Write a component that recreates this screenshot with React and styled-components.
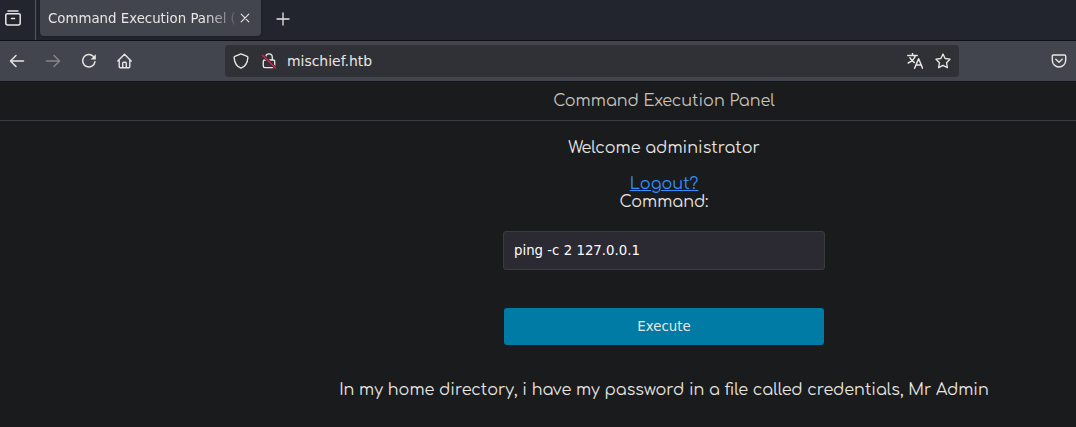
import React from "react";
import styled, { createGlobalStyle } from "styled-components";

const GlobalStyle = createGlobalStyle`
  * { box-sizing: border-box; }
  body { margin: 0; background: #1a1b1d; overflow: hidden; }
`;

const Window = styled.div`
  width: 100%;
  height: 427px;
  overflow: hidden;
  display: flex;
  flex-direction: column;
  background: #1a1b1d;
  font-family: "DejaVu Sans", sans-serif;
  font-size: 13.333px;
  color: #e8e6e3;
`;

const TabBar = styled.div`
  height: 41px;
  flex: none;
  display: flex;
  align-items: flex-start;
  background: #22252e;
  border-bottom: 1px solid #0f1013;
`;

const RecentTabs = styled.div`
  width: 36px;
  height: 40px;
  padding: 10px 0 0 5px;
  border-right: 1px solid #55575e;
`;

const Tab = styled.div`
  width: 221px;
  height: 36px;
  margin-left: 4px;
  padding: 0 8px;
  display: flex;
  align-items: center;
  justify-content: space-between;
  background: #42454d;
  border-radius: 0 0 4px 4px;
  box-shadow: 0 0 3px rgba(0, 0, 0, 0.35);
`;

const TabTitle = styled.span`
  width: 189px;
  padding-top: 2px;
  overflow: hidden;
  white-space: nowrap;
  line-height: 36px;
  mask-image: linear-gradient(to right, #000 158px, transparent 192px);
`;

const NewTab = styled.div`
  padding: 12px 0 0 14.5px;
`;

const Toolbar = styled.div`
  height: 41px;
  flex: none;
  display: flex;
  align-items: center;
  background: #42454d;
  border-bottom: 1px solid #151619;
`;

const NavButtons = styled.div`
  width: 225px;
  padding-left: 9px;
  display: flex;
  gap: 20px;
`;

const AddressBar = styled.div`
  width: 734px;
  height: 32px;
  padding: 0 8px;
  display: flex;
  align-items: center;
  background: #303136;
  border-radius: 4px;
`;

const Address = styled.span`
  flex: 1;
  margin-left: 10px;
  font-size: 13.95px;
`;

const IconPair = styled.div`
  display: flex;
  gap: 12px;
`;

const PocketButton = styled.div`
  margin-left: 92px;
  display: flex;
`;

const Icon = styled.svg`
  display: block;
  flex: none;
  width: ${(p) => p.$size || 16}px;
  height: ${(p) => p.$size || 16}px;
  fill: none;
  stroke: ${(p) => p.$color || "#e8e6e3"};
  stroke-width: ${(p) => p.$weight || 1.35};
  stroke-linecap: round;
  stroke-linejoin: round;
`;

/* The page is wider than the visible part of the window. */
const Page = styled.main`
  width: 1328px;
  flex: none;
  display: flex;
  flex-direction: column;
  align-items: center;
  font-family: Comfortaa, Lato, sans-serif;
  font-size: 16px;
  line-height: 18px;
`;

const Header = styled.header`
  width: 100%;
  height: 39px;
  padding-top: 10px;
  border-bottom: 1px solid #3a3d40;
  text-align: center;
  color: #c8c3bc;
`;

const Line = styled.div`
  height: 18px;
  margin-top: ${(p) => p.$top || 0}px;
  white-space: nowrap;
`;

const Logout = styled.a`
  color: #3391ff;
  text-decoration: underline;
`;

const CommandForm = styled.form`
  display: flex;
  flex-direction: column;
  align-items: center;
  margin-top: 20px;
`;

const CommandInput = styled.input`
  width: 322px;
  height: 39px;
  padding: 0 10px;
  background: #2b2a33;
  border: 1px solid #393c3f;
  border-radius: 3px;
  color: #fbfbfe;
  font: 13.333px "DejaVu Sans", sans-serif;
  outline: none;
`;

const ExecuteButton = styled.button`
  width: 320px;
  height: 37px;
  margin-top: 38px;
  padding: 0;
  background: #007ba5;
  border: 0;
  border-radius: 3px;
  color: #e8e6e3;
  font: 13.333px "DejaVu Sans", sans-serif;
`;

export default function App() {
  return (
    <Window>
      <GlobalStyle />
      <TabBar>
        <RecentTabs>
          <Icon $weight={1.5}>
            <path d="M3 .9h10M2.200 3.700h11.600q1.400 0 1.400 1.400v8q0 2-2 2H2.800q-2 0-2-2v-8q0-1.400 1.400-1.400zM6.500 8.500h3" />
          </Icon>
        </RecentTabs>
        <Tab>
          <TabTitle>Command Execution Panel (P</TabTitle>
          <Icon $weight={1.1}>
            <path d="M4.200 4.200l7.600 7.600M11.800 4.200l-7.600 7.600" />
          </Icon>
        </Tab>
        <NewTab>
          <Icon $weight={1.3} $size={14}>
            <path d="M7 1v12M1 7h12" />
          </Icon>
        </NewTab>
      </TabBar>

      <Toolbar>
        <NavButtons>
          <Icon $weight={1.5}>
            <path d="M1.500 8h13M7 2.500L1.500 8 7 13.500" />
          </Icon>
          <Icon $weight={1.5} $color="#85868a">
            <path d="M1.500 8h13M9 2.500L14.500 8 9 13.500" />
          </Icon>
          <Icon $weight={1.5}>
            <path d="M14 8.700A6.200 6.200 0 1 1 12.200 3.300" />
            <path d="M14.800 1.300v5.200H9.600z" fill="#e8e6e3" stroke="none" />
          </Icon>
          <Icon $weight={1.4}>
            <path d="M.8 8L7.500 1.300 14.200 8M2.200 7v6.600q0 1.200 1.200 1.200h8.200q1.200 0 1.200-1.200V7M5.700 14.500V10.200q0-1 1-1h1.600q1 0 1 1v4.300" />
          </Icon>
        </NavButtons>
        <AddressBar>
          <IconPair>
            <Icon>
              <path d="M8 .9l6.200 2.500q.8.300.7 1.200C14.500 9.500 12.500 13.500 8 15.200 3.500 13.500 1.500 9.500 1.100 4.600q-.1-.9.700-1.200z" />
            </Icon>
            <Icon>
              <path d="M4.700 7V4.200a3.300 3.300 0 0 1 6.600 0V7M3.700 7h8.600q1.400 0 1.400 1.400v4.700q0 1.500-1.500 1.500H3.800q-1.500 0-1.500-1.500V8.400Q2.300 7 3.700 7z" />
              <path d="M1.500 2l13 13" stroke="#303136" strokeWidth="3" />
              <path d="M1.500 2.200l13 12.800" stroke="#e31b4d" />
            </Icon>
          </IconPair>
          <Address>mischief.htb</Address>
          <IconPair>
            <Icon $weight={1.5}>
              <path d="M.8 2.500h9.400M5.500.6v1.900M8.300 2.800C7.200 6.200 4.800 8.500 1.200 10M3 4.800C4 7 5.500 8.500 7.300 9.500M7.600 15.200L11.600 5.700l4 9.500M9 12h5.300" />
            </Icon>
            <Icon>
              <path d="M8 1l2.100 4.500 4.900.7-3.500 3.500.9 5L8 12.300l-4.400 2.400.9-5L1 6.200l4.900-.7z" />
            </Icon>
          </IconPair>
        </AddressBar>
        <PocketButton>
          <Icon $weight={1.4}>
            <path d="M2.500 2h11q1.200 0 1.200 1.200v4.100a6.700 6.700 0 0 1-13.400 0V3.200Q1.300 2 2.500 2zM4.800 6.300L8 9.300l3.200-3" />
          </Icon>
        </PocketButton>
      </Toolbar>

      <Page>
        <Header>
          <Line>Command Execution Panel</Line>
        </Header>
        <Line $top={18}>Welcome administrator</Line>
        <Line $top={18}>
          <Logout>Logout?</Logout>
        </Line>
        <Line>Command:</Line>
        <CommandForm onSubmit={(e) => e.preventDefault()}>
          <CommandInput defaultValue="ping -c 2 127.0.0.1" />
          <ExecuteButton type="submit">Execute</ExecuteButton>
        </CommandForm>
        <Line $top={36}>
          In my home directory, i have my password in a file called credentials, Mr Admin
        </Line>
      </Page>
    </Window>
  );
}
